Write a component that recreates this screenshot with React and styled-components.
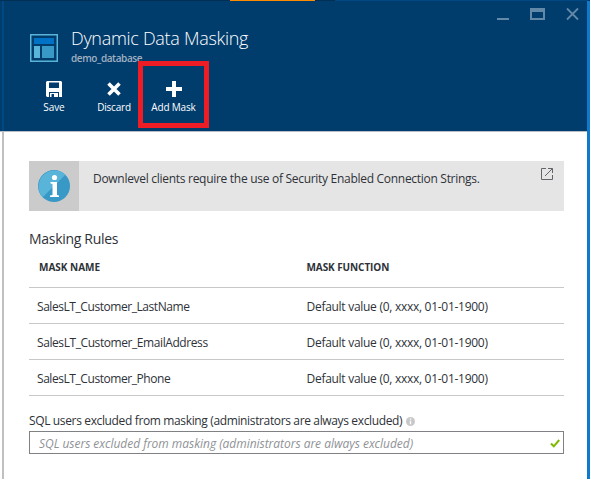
import React from "react";
import styled, { createGlobalStyle } from "styled-components";

const Global = createGlobalStyle`
  *, *::before, *::after { box-sizing: border-box; }
  body { margin: 0; background: #fff; overflow: hidden; font-family: "Open Sans", "Noto Sans", sans-serif; color: #2e3238; }
`;

const Page = styled.div`
  width: 590px;
  height: 479px;
  display: grid;
  grid-template-rows: 1px 1fr;
`;
const TopStrip = styled.div`
  display: grid;
  grid-template-columns: 230px 85px 20px 1fr 2px;
  background: #022f54;
`;
const StripPart = styled.div`
  background: ${(p) => p.$color};
`;
const Columns = styled.div`
  display: grid;
  grid-template-columns: 587px 3px;
  min-height: 0;
`;
const SideBar = styled.div`
  background: #0e7acc;
`;
const Blade = styled.main`
  display: flex;
  flex-direction: column;
  min-height: 0;
`;
const Header = styled.header`
  height: 130px;
  background: linear-gradient(to right, transparent 2px, #004884 2px, #004884 4px, transparent 4px) #003c6c;
  flex: none;
`;
const TitleRow = styled.div`
  display: flex;
  height: 72px;
`;
const BladeIcon = styled.svg`
  width: 28px;
  height: 28px;
  margin: 33px 13px 0 30px;
  flex: none;
`;
const Titles = styled.div`
  flex: 1;
  padding-top: 24px;
`;
const Text = styled.span`
  display: block;
  margin: 0;
  width: max-content;
  white-space: nowrap;
  font-size: ${(p) => p.$size}px;
  line-height: ${(p) => p.$line || 18}px;
  letter-spacing: ${(p) => p.$track || 0}px;
  font-weight: ${(p) => p.$weight || 400};
  color: ${(p) => p.$color || "inherit"};
`;
const WindowButtons = styled.div`
  display: flex;
  gap: 21px;
  padding: 6px 8px 0 0;
  svg { display: block; height: 14px; }
`;
const Toolbar = styled.div`
  display: flex;
  padding-left: 24px;
`;
const Command = styled.button`
  width: 60px;
  height: 50px;
  padding: 8px 0 0;
  border: 0;
  background: none;
  color: #fff;
  font-family: inherit;
  display: flex;
  flex-direction: column;
  align-items: center;
  gap: 3px;
  svg { display: block; width: 16px; height: 16px; }
`;
const Highlighted = styled.div`
  width: 71px;
  height: 67px;
  margin: -12px 0 0 -6px;
  border: 5px solid #ee1c24;
  display: flex;
  justify-content: center;
  align-items: flex-start;
  padding-top: 7px;
`;
const Body = styled.div`
  flex: 1;
  border-top: 1px solid #b7bec6;
  background: linear-gradient(to right, #fff 2px, #c0c0c0 2px, #c0c0c0 4px, #fff 4px);
  padding: 29px 23px 0 29px;
`;
const Notice = styled.section`
  display: flex;
  height: 50px;
  background: #e5e5e5;
`;
const NoticeIcon = styled.div`
  width: 50px;
  background: #cbcbcb;
  display: flex;
  align-items: center;
  justify-content: center;
`;
const NoticeText = styled.div`
  flex: 1;
  padding: 9px 0 0 14px;
`;
const ExternalIcon = styled.svg`
  width: 12px;
  height: 12px;
  margin: 7px 11px 0 0;
`;
const SectionTitle = styled.h2`
  margin: 18px 0 0;
  height: 20px;
  font-weight: 400;
`;
const Row = styled.div`
  display: grid;
  grid-template-columns: 269.5px 1fr;
  height: 36px;
  align-items: center;
  padding: 2px 0 0 8px;
  border-bottom: 1px solid #c8c8c8;
`;
const HeadRow = styled(Row)`
  height: 39px;
  grid-template-columns: 267.5px 1fr;
  padding: 0 0 3px 10px;
`;
const FieldLabel = styled.div`
  display: flex;
  align-items: center;
  gap: 4px;
  height: 18px;
  margin-top: 16px;
`;
const Field = styled.div`
  height: 23px;
  margin-top: 1px;
  border: 1px solid #7f8185;
  display: flex;
  align-items: center;
  justify-content: space-between;
  padding: 2px 3px 0 9px;
  font-style: italic;
`;

const rows = [
  { name: "SalesLT_Customer_LastName", track: -0.44 },
  { name: "SalesLT_Customer_EmailAddress", track: -0.42 },
  { name: "SalesLT_Customer_Phone", track: -0.44 },
];

export default function App() {
  return (
    <>
      <Global />
      <Page>
        <TopStrip>
          <StripPart $color="#022f54" />
          <StripPart $color="#ff8c00" />
          <StripPart $color="#022f54" />
          <StripPart $color="#004884" />
        </TopStrip>
        <Columns>
          <Blade>
            <Header>
              <TitleRow>
                <BladeIcon viewBox="0 0 28 28">
                  <rect width="28" height="28" fill="#59b4d9" />
                  <rect x="1.500" y="1.500" width="25" height="25" fill="#003c6c" />
                  <rect x="4" y="4" width="20" height="6" fill="#0072c6" />
                  <rect x="4" y="12" width="6" height="12" fill="#59b4d9" />
                  <rect x="12" y="12" width="12" height="12" fill="#3999c6" />
                </BladeIcon>
                <Titles>
                  <Text as="h1" $size={18} $line={27} $track={-0.3} $color="#fff" $weight={300}>Dynamic Data Masking</Text>
                  <Text $size={10} $line={12} $weight={600} $track={-0.4} $color="#a0b1c2">demo_database</Text>
                </Titles>
                <WindowButtons>
                  <svg width="13" viewBox="0 0 13 14"><path d="M1 12h12" stroke="#6289a8" strokeWidth="2" /></svg>
                  <svg width="15" viewBox="0 0 15 14"><path d="M0 1h15v12H0zM2 5v6h11V5z" fill="#6289a8" fillRule="evenodd" /></svg>
                  <svg width="13" viewBox="0 0 13 14"><path d="M1 1.500l11 11M12 1.500l-11 11" stroke="#6289a8" strokeWidth="1.800" /></svg>
                </WindowButtons>
              </TitleRow>
              <Toolbar>
                <Command>
                  <svg viewBox="0 0 16 16"><path d="M1 0h14l1 1v15h-3v-5H3v5H1l-1-1V1zM3 1.500V7h10V1.500zM4 12h8v4H8v-3H5.500v3H4z" fill="#fff" fillRule="evenodd" /></svg>
                  <Text $size={10} $line={14} $track={-0.1}>Save</Text>
                </Command>
                <Command>
                  <svg viewBox="0 0 16 16"><path d="M2.500 2.500l11 11M13.500 2.500l-11 11" stroke="#fff" strokeWidth="3.600" /></svg>
                  <Text $size={10} $line={14} $track={-0.2}>Discard</Text>
                </Command>
                <Highlighted>
                  <Command>
                    <svg viewBox="0 0 16 16"><path d="M8 0v16M0 8h16" stroke="#fff" strokeWidth="4" /></svg>
                    <Text $size={10} $line={14} $track={-0.18}>Add Mask</Text>
                  </Command>
                </Highlighted>
              </Toolbar>
            </Header>
            <Body>
              <Notice>
                <NoticeIcon>
                  <svg width="34" height="34" viewBox="0 0 34 34">
                    <circle cx="17" cy="17" r="16" fill="#3999c6" />
                    <path d="M28.300 5.700A16 16 0 0 0 5.700 28.300z" fill="#59b4d9" />
                    <circle cx="17.500" cy="8.500" r="2.600" fill="#fff" />
                    <path d="M13.500 13h6.500v13l2 .6V28h-9v-1.400l2.500-.6V15l-2-.6z" fill="#fff" />
                  </svg>
                </NoticeIcon>
                <NoticeText><Text $size={12} $track={-0.29}>Downlevel clients require the use of Security Enabled Connection Strings.</Text></NoticeText>
                <ExternalIcon viewBox="0 0 12 12" fill="none" stroke="#62666b">
                  <path d="M5 .5H.5v11h11V7M7 .5h4.500V5M11.500 .5L4 8" />
                </ExternalIcon>
              </Notice>
              <SectionTitle><Text $size={14} $line={20} $track={-0.3}>Masking Rules</Text></SectionTitle>
              <HeadRow>
                <Text $size={10} $weight={700}>MASK NAME</Text>
                <Text $size={10} $weight={700} $track={-0.08}>MASK FUNCTION</Text>
              </HeadRow>
              {rows.map(({ name, track }) => (
                <Row key={name}>
                  <Text $size={12} $track={track}>{name}</Text>
                  <Text $size={12} $track={-0.28}>Default value (0, xxxx, 01-01-1900)</Text>
                </Row>
              ))}
              <FieldLabel>
                <Text $size={12} $track={-0.36}>SQL users excluded from masking (administrators are always excluded)</Text>
                <svg width="9" height="9" viewBox="0 0 9 9"><circle cx="4.500" cy="4.500" r="4.500" fill="#c8c8c8" /><path d="M4.500 1.500v1.200M4.500 3.700v3.500" stroke="#fff" strokeWidth="1.300" /></svg>
              </FieldLabel>
              <Field>
                <Text $size={12} $track={-0.03} $color="#8f9296">SQL users excluded from masking (administrators are always excluded)</Text>
                <svg width="10" height="9" viewBox="0 0 10 9"><path d="M1 4.500L3.800 7.300L9.200 1" fill="none" stroke="#7fba00" strokeWidth="2" /></svg>
              </Field>
            </Body>
          </Blade>
          <SideBar />
        </Columns>
      </Page>
    </>
  );
}
